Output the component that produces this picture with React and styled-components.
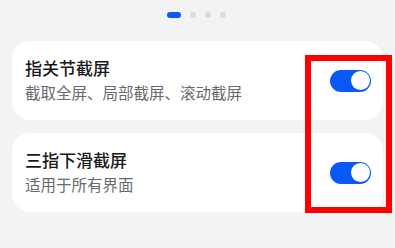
import React from "react";
import styled, { createGlobalStyle } from "styled-components";

const GlobalStyle = createGlobalStyle`
  html, body {
    margin: 0;
    padding: 0;
    background-color: #f1f3f5;
    font-family: "Noto Sans CJK SC", "Noto Sans", sans-serif;
  }
`;

const items = [
  { title: "指关节截屏", desc: "截取全屏、局部截屏、滚动截屏", on: true },
  { title: "三指下滑截屏", desc: "适用于所有界面", on: true },
];

export default function App() {
  return (
    <Page>
      <GlobalStyle />
      <Indicator>
        <Dot active />
        <Dot />
        <Dot />
        <Dot />
      </Indicator>
      <CardList>
        {items.map(({ title, desc, on }) => (
          <Card key={title}>
            <TextBox>
              <Title>{title}</Title>
              <Desc>{desc}</Desc>
            </TextBox>
            <Switch on={on}>
              <Knob />
            </Switch>
          </Card>
        ))}
      </CardList>
      <Highlight />
    </Page>
  );
}

const Page = styled.div`
  position: relative;
  width: 395px;
  height: 248px;
  box-sizing: border-box;
  padding: 11px 12px 0;
  overflow: hidden;
`;

const Indicator = styled.div`
  display: flex;
  justify-content: center;
  align-items: center;
  gap: 9px;
  height: 7px;
  padding-right: 2px;
`;

const Dot = styled.span`
  width: ${({ active }) => (active ? "14px" : "6px")};
  height: 6px;
  border-radius: 3px;
  background-color: ${({ active }) => (active ? "#0a59f7" : "#d9dbdd")};
`;

const CardList = styled.div`
  display: flex;
  flex-direction: column;
  gap: 13px;
  margin-top: 23px;
`;

const Card = styled.div`
  display: flex;
  justify-content: space-between;
  align-items: center;
  height: 79px;
  padding: 0 12px 0 13px;
  border-radius: 18px;
  background-color: #ffffff;
  box-sizing: border-box;
`;

const TextBox = styled.div`
  display: flex;
  flex-direction: column;
  gap: 3px;
  margin-top: -2px;
`;

const Title = styled.span`
  font-size: 17px;
  line-height: 22px;
  font-weight: 500;
  color: #191919;
`;

const Desc = styled.span`
  font-size: 15.5px;
  line-height: 20px;
  color: #666a6e;
`;

const Switch = styled.div`
  position: relative;
  width: 41px;
  height: 22px;
  border-radius: 11px;
  background-color: ${({ on }) => (on ? "#0a59f7" : "#c8cacc")};
`;

const Knob = styled.span`
  position: absolute;
  top: 1.5px;
  right: 1.5px;
  width: 19px;
  height: 19px;
  border-radius: 50%;
  background-color: #ffffff;
`;

const Highlight = styled.div`
  position: absolute;
  left: 305px;
  top: 55px;
  width: 87px;
  height: 158px;
  box-sizing: border-box;
  border: 6px solid #ff0000;
`;
